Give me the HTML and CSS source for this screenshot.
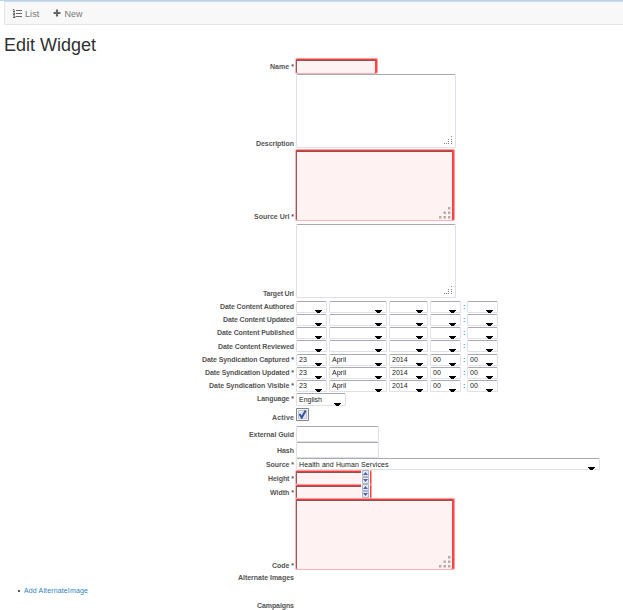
FILE: index.html
```
<!DOCTYPE html>
<html lang="en">
<head>
<meta charset="utf-8">
<title>Edit Widget</title>
<link rel="stylesheet" href="styles.css">
</head>
<body>
<nav class="navbar">
  <a class="nav-item"><svg class="nav-icon list-icon" viewBox="0 0 9 9"><path d="M3 1.5h6M3 4.5h6M3 7.5h6" stroke="#666" stroke-width="1.2"/><path d="M0 .5h1v2M0 2.5h2M0 4h2L0 5.5h2M0 7h2v1.5H0" fill="none" stroke="#666"/></svg>List</a>
  <a class="nav-item"><svg class="nav-icon plus-icon" viewBox="0 0 8 8"><path d="M4 .5v7M.5 4h7" stroke="#666" stroke-width="2.2"/></svg>New</a>
</nav>
<h1>Edit Widget</h1>
<form class="form" id="form"></form>
<script src="form.js"></script>
</body>
</html>
```
FILE: styles.css
```
* { box-sizing: border-box; }
body { margin: 0; height: 610px; overflow: hidden; background: #fff; font: 7px/9px "Liberation Sans", Arial, sans-serif; color: #222; border-top: 1px solid #b9d5eb; }
.navbar { display: flex; gap: 14px; height: 24px; margin-left: 4px; padding: 6px 0 0 8px; background: #f8f8f8; border: 1px solid #e4e4e4; border-top: 1px solid #c5d9e8; border-right: 0; border-radius: 0 0 0 2px; }
.nav-item { display: flex; height: 12px; font-size: 9px; line-height: 12px; color: #777; letter-spacing: .1px; }
.nav-icon { flex: none; margin-right: 3px; }
.list-icon { width: 9px; height: 9px; margin-top: 1px; }
.plus-icon { width: 8px; height: 8px; margin-top: 1px; }
h1 { height: 33px; margin: 0; padding: 9px 0 0 4px; font-size: 18px; line-height: 22px; font-weight: 400; color: #303030; letter-spacing: 0; }
.row { display: flex; align-items: flex-start; }
.label { flex: none; align-self: flex-end; width: 294px; height: 9px; }
.label text { font: 700 7px "Liberation Sans", Arial, sans-serif; fill: #555; }
.box { position: relative; flex: none; margin-left: 2px; border: 1px solid #dfe0e9; border-top-color: #a9a9b0; border-radius: 1.5px; background: #fff; }
.invalid { margin-left: 1px; border: 1px solid #ffb3b3; border-top-color: #ff9c9c; border-right-color: #ff9c9c; border-radius: 2px; background: #fff2f2; box-shadow: inset 1px 0 #8d5d5d, inset -2px 0 #f84444, inset 0 1px #f03c3c, inset 0 2px #8b5252; }
.text { width: 83px; height: 16px; }
.area { width: 160px; height: 74px; }
.area.invalid { height: 72px; }
.area.code { height: 72px; }
.grip { position: absolute; right: 2px; bottom: 2px; width: 9px; height: 9px; fill: #888; }
.invalid .grip { right: 3px; bottom: 1px; width: 13px; height: 13px; fill: #b9a9a9; }
.select { height: 12px; padding-left: 2px; line-height: 9px; color: #222; white-space: nowrap; }
.arrow { position: absolute; right: 4px; bottom: -1px; width: 7px; height: 3px; background: #000; clip-path: polygon(0 0, 100% 0, 100% 34%, 86% 34%, 86% 67%, 72% 67%, 72% 100%, 28% 100%, 28% 67%, 14% 67%, 14% 34%, 0 34%); }
.day, .hour, .minute { width: 31px; }
.month { width: 58px; }
.year { width: 39px; }
.colon { width: 4px; padding-left: 2px; color: #3a8fcc; font-weight: 700; line-height: 11px; }
.language { width: 50px; height: 13px; line-height: 11px; }
.language .arrow { bottom: -1px; }
.source { width: 304px; line-height: 11px; letter-spacing: .1px; }
.number { width: 77px; height: 15px; }
.stepper { position: absolute; right: 1px; top: -1px; width: 9px; height: 14px; }
.check { flex: none; width: 13px; height: 13px; margin-left: 2px; }
.list { display: flex; align-items: center; gap: 4px; height: 9px; margin: 4px 0 0 18px; }
.bullet { width: 2px; height: 2px; border-radius: 50%; background: #222; }
.list a { color: #2f7fc1; letter-spacing: .14px; }
.campaigns { margin-top: 6px; }
```
FILE: form.js
```
const arrow = '<span class="arrow"></span>';
const select = (name, value = '') => `<div class="box select ${name}">${value}${arrow}</div>`;
const date = values => select('day', values[0]) + select('month', values[1]) + select('year', values[2]) +
  select('hour', values[3]) + '<span class="colon">:</span>' + select('minute', values[4]);
const smallGrip = '<svg class="grip" viewBox="0 0 9 9"><path d="M7 0h1v1H7zM7 3h1v1H7zM4 3h1v1H4zM7 5h1v1H7zM4 5h1v1H4zM7 7h1v1H7zM4 7h1v1H4zM2 7h1v1H2zM0 7h1v1H0z"/></svg>';
const largeGrip = '<svg class="grip" viewBox="0 0 13 13"><path d="M10 1h2.4v2.4H10zM10 5.5h2.4v2.4H10zM5.5 5.5h2.4v2.4H5.5zM10 10h2.4v2.4H10zM5.5 10h2.4v2.4H5.5zM1 10h2.4v2.4H1z"/></svg>';
const area = '<div class="box area">' + smallGrip + '</div>';
const badArea = '<div class="box area invalid">' + largeGrip + '</div>';
const badCode = '<div class="box area code invalid">' + largeGrip + '</div>';
const number = '<div class="box number invalid"><svg class="stepper" viewBox="0 0 9 14"><path fill="#fff" d="M0 0h9v14H0z"/><path fill="#e6e9f2" stroke="#b2b5c0" d="M1.5.5h6v6h-6zM1.5 7.5h6v6h-6z"/><path fill="#4a64bb" d="M4.5 2l2.5 3H2zM2 9h5l-2.5 3z"/></svg></div>';
const check = '<svg class="check" viewBox="0 0 13 13"><path d="M.5.5h12v12H.5z" fill="#f4f4f4" stroke="#858585"/><path d="M2.5 2.5h8v8h-8z" fill="#e2e6ec" stroke="#c2c8d0"/><path d="M3.5 6l2.2 3.5L9.7 2.5" fill="none" stroke="#35539c" stroke-width="2"/></svg>';
const none = date(['', '', '', '', '']);
const now = date(['23', 'April', '2014', '00', '00']);

// label, rendered label width, space above, row height, space below label, control
const rows = [
  ['Name *', 24, 0, 16, 3, '<div class="box text invalid"></div>'],
  ['Description', 38, 0, 74, 0, area],
  ['Source Url *', 40, 1, 72, 0, badArea],
  ['Target Url', 31, 3, 74, 0, area],
  ['Date Content Authored', 74, 3, 12, 2, none],
  ['Date Content Updated', 71, 1, 12, 2, none],
  ['Date Content Published', 77, 1, 12, 2, none],
  ['Date Content Reviewed', 76, 1, 12, 1, none],
  ['Date Syndication Captured *', 92, 2, 12, 2, now],
  ['Date Syndication Updated *', 89, 1, 12, 2, now],
  ['Date Syndication Visible *', 85, 1, 12, 2, now],
  ['Language *', 37, 1, 13, 3, select('language', 'English')],
  ['Active', 22, 2, 14, 0, check],
  ['External Guid', 45, 4, 16, 3, '<div class="box text"></div>'],
  ['Hash', 17, 0, 16, 3, '<div class="box text"></div>'],
  ['Source *', 28, 0, 12, 1, select('source', 'Health and Human Services')],
  ['Height *', 26, 0, 14, 1, number],
  ['Width *', 24, 0, 14, 1, number],
  ['Code *', 22, 0, 72, 0, badCode],
  ['Alternate Images', 56, 3, 9, 0, ''],
];
const row = ([label, width, above, height, below, control]) =>
  `<div class="row" style="margin-top:${above}px;height:${height}px"><svg class="label" style="margin-bottom:${below}px"><text x="${294 - width}" y="7" textLength="${width}">${label}</text></svg>${control}</div>`;
document.getElementById('form').innerHTML = rows.map(row).join('') +
  '<div class="list"><span class="bullet"></span><a>Add AlternateImage</a></div>' +
  '<div class="campaigns">' + row(['Campaigns', 37, 0, 9, 0, '']) + '</div>';
```
